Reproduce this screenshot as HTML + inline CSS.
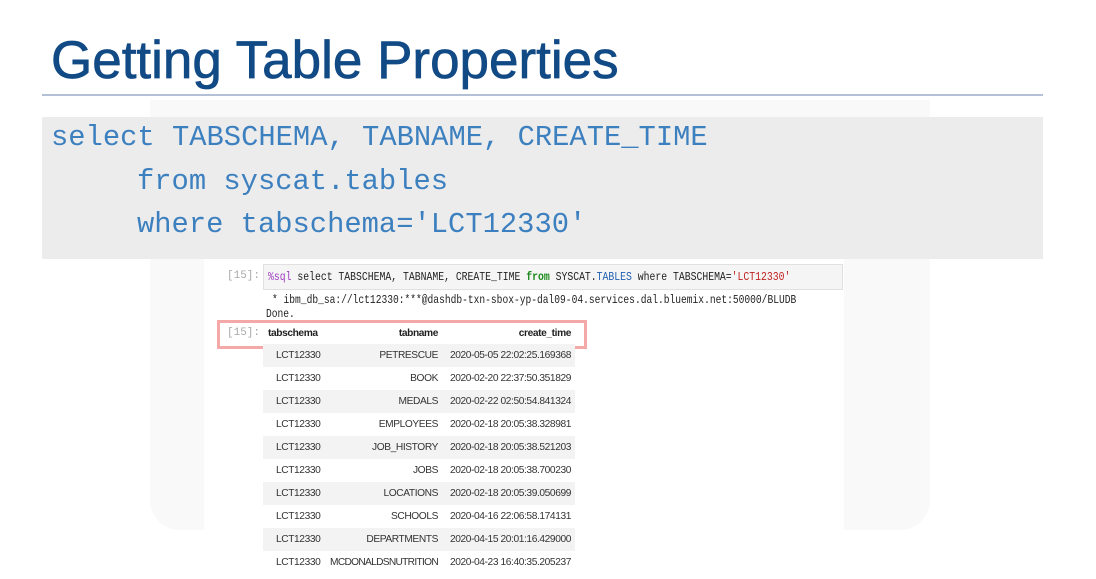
<!DOCTYPE html>
<html><head><meta charset="utf-8"><style>
body{margin:0;width:1096px;height:576px;background:#fff;position:relative;overflow:hidden;font-family:"Liberation Sans",sans-serif}
.abs{position:absolute}
.title{left:51px;top:30px;font-size:53px;color:#114a85;letter-spacing:0px;white-space:nowrap;-webkit-text-stroke:0.7px #114a85}
.rule{left:42px;top:94px;width:1001px;height:2px;background:#b3c0d6}
.panel{left:150px;top:100px;width:780px;height:430px;background:#f9f9f9;border-radius:0 0 30px 30px}
.inner{left:204px;top:259px;width:640px;height:320px;background:#fff}
.code{left:42px;top:117px;width:1001px;height:142px;background:#ececec}
.cl{position:absolute;font-family:"Liberation Mono",monospace;font-size:28.8px;color:#3d80bf;white-space:pre}
.inp{left:263px;top:264px;width:580px;height:26px;background:#f5f5f5;border:1px solid #e0e0e0;box-sizing:border-box}
.mono{font-family:"Liberation Mono",monospace;font-size:12px;white-space:pre;color:#222;transform-origin:left;}
.prompt{font-family:"Liberation Mono",monospace;font-size:11px;color:#aaa}
.box{left:217px;top:320px;width:370px;height:29px;border:3px solid #f5a8a8;box-sizing:border-box}
.row{position:absolute;left:263px;width:312px;height:23px;font-size:10.2px;color:#333;letter-spacing:-0.4px}
.row span{position:absolute;top:6px;white-space:nowrap}
.g{background:#f3f3f3}
.a{left:13px}.b{right:137px}.c{right:4px}
</style></head><body>
<div class="abs panel"></div>
<div class="abs inner"></div>
<div class="abs title">Getting Table Properties</div>
<div class="abs rule"></div>
<div class="abs code">
<div class="cl" style="left:9px;top:4px">select TABSCHEMA, TABNAME, CREATE_TIME</div>
<div class="cl" style="left:95px;top:48px">from syscat.tables</div>
<div class="cl" style="left:95px;top:91px">where tabschema='LCT12330'</div>
</div>
<div class="abs prompt" style="left:227px;top:270px">[15]:</div>
<div class="abs inp"><div class="mono" style="position:absolute;left:4px;top:5px;transform:scaleX(0.815)"><span style="color:#a040c0">%sql</span> select TABSCHEMA, TABNAME, CREATE_TIME <span style="color:#1a8a1a;font-weight:bold">from</span> SYSCAT.<span style="color:#2060b0">TABLES</span> where TABSCHEMA=<span style="color:#c02020">'LCT12330'</span></div></div>
<div class="abs mono" style="left:272px;top:293px;transform:scaleX(0.8)">* ibm_db_sa://lct12330:***@dashdb-txn-sbox-yp-dal09-04.services.dal.bluemix.net:50000/BLUDB</div>
<div class="abs mono" style="left:266px;top:307px;transform:scaleX(0.8)">Done.</div>
<div class="abs box"></div>
<div class="abs prompt" style="left:227px;top:327px">[15]:</div>
<div class="row" style="top:322px;font-weight:bold;color:#222"><span style="left:5px">tabschema</span><span class="b">tabname</span><span class="c">create_time</span></div>
<div class="row g" style="top:344px"><span class="a">LCT12330</span><span class="b">PETRESCUE</span><span class="c">2020-05-05 22:02:25.169368</span></div>
<div class="row" style="top:367px"><span class="a">LCT12330</span><span class="b">BOOK</span><span class="c">2020-02-20 22:37:50.351829</span></div>
<div class="row g" style="top:390px"><span class="a">LCT12330</span><span class="b">MEDALS</span><span class="c">2020-02-22 02:50:54.841324</span></div>
<div class="row" style="top:413px"><span class="a">LCT12330</span><span class="b">EMPLOYEES</span><span class="c">2020-02-18 20:05:38.328981</span></div>
<div class="row g" style="top:436px"><span class="a">LCT12330</span><span class="b">JOB_HISTORY</span><span class="c">2020-02-18 20:05:38.521203</span></div>
<div class="row" style="top:459px"><span class="a">LCT12330</span><span class="b">JOBS</span><span class="c">2020-02-18 20:05:38.700230</span></div>
<div class="row g" style="top:482px"><span class="a">LCT12330</span><span class="b">LOCATIONS</span><span class="c">2020-02-18 20:05:39.050699</span></div>
<div class="row" style="top:505px"><span class="a">LCT12330</span><span class="b">SCHOOLS</span><span class="c">2020-04-16 22:06:58.174131</span></div>
<div class="row g" style="top:528px"><span class="a">LCT12330</span><span class="b">DEPARTMENTS</span><span class="c">2020-04-15 20:01:16.429000</span></div>
<div class="row" style="top:551px"><span class="a">LCT12330</span><span class="b" style="letter-spacing:-0.7px">MCDONALDSNUTRITION</span><span class="c">2020-04-23 16:40:35.205237</span></div>
</body></html>
